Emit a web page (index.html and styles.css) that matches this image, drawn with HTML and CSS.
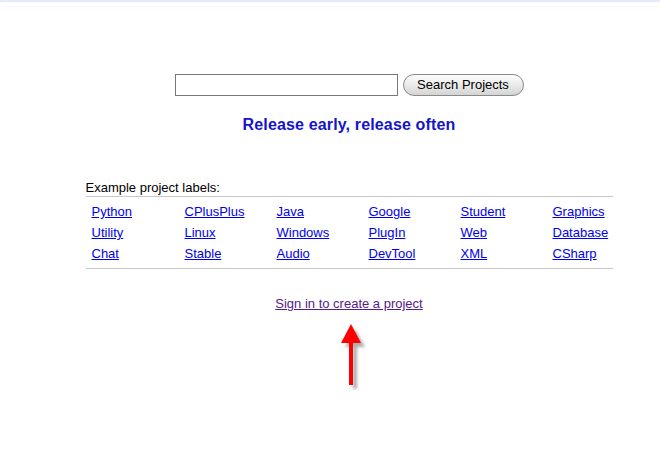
FILE: index.html
```html
<!DOCTYPE html>
<html>
<head>
<meta charset="utf-8">
<link rel="stylesheet" href="styles.css">
</head>
<body>
<div class="topband"></div>
<div class="page">
  <form class="search">
    <input class="search-input" type="text">
    <button class="search-btn" type="button">Search Projects</button>
  </form>
  <h2 class="motto">Release early, release often</h2>
  <div class="labels">
    <div class="labels-title">Example project labels:</div>
    <div class="labels-grid">
      <a href="#">Python</a><a href="#">CPlusPlus</a><a href="#">Java</a><a href="#">Google</a><a href="#">Student</a><a href="#">Graphics</a>
      <a href="#">Utility</a><a href="#">Linux</a><a href="#">Windows</a><a href="#">PlugIn</a><a href="#">Web</a><a href="#">Database</a>
      <a href="#">Chat</a><a href="#">Stable</a><a href="#">Audio</a><a href="#">DevTool</a><a href="#">XML</a><a href="#">CSharp</a>
    </div>
  </div>
  <div class="signin"><a class="signin-link" href="#">Sign in to create a project</a></div>
  <div class="arrow">
    <svg width="40" height="72" viewBox="0 0 40 72">
      <defs>
        <filter id="sh" x="-50%" y="-50%" width="200%" height="200%">
          <feGaussianBlur stdDeviation="1.6"/>
        </filter>
      </defs>
      <g fill="#9a9a9a" opacity="0.8" filter="url(#sh)" transform="translate(4,4)">
        <polygon points="20,2 30,20 10,20"/>
        <rect x="18" y="19" width="4" height="43"/>
      </g>
      <g fill="#ff0000">
        <polygon points="20,1 30,20 10,20"/>
        <rect x="18" y="19" width="4" height="43"/>
      </g>
    </svg>
  </div>
</div>
</body>
</html>
```
FILE: styles.css
```css
html, body {
  margin: 0;
  padding: 0;
  background: #fff;
}
body {
  font-family: "Liberation Sans", Arial, sans-serif;
  font-size: 13px;
  color: #000;
}
.topband {
  height: 2px;
  background: #e3eaf8;
  border-bottom: 3px solid #fff;
  box-shadow: 0 4px 0 -2px #f6f8fd;
}
.page {
  display: flex;
  flex-direction: column;
  align-items: center;
  padding: 69px 0 0 38px;
}
.search {
  display: flex;
  align-items: center;
  gap: 5px;
  margin: 0;
}
.search-input {
  width: 219px;
  height: 18px;
  border: 1px solid #777;
  padding: 1px;
  margin: 0;
  font: inherit;
}
.search-btn {
  width: 121px;
  height: 22px;
  border: 1px solid #8a8a8a;
  border-radius: 11px;
  background: linear-gradient(#fdfdfd, #e6e6e6 60%, #d4d4d4);
  font: inherit;
  font-size: 13px;
  color: #000;
  padding: 0;
  margin-top: -1px;
}
.motto {
  margin: 19px 0 0;
  font-size: 16px;
  font-weight: bold;
  color: #1414cc;
  line-height: 20px;
  letter-spacing: 0.15px;
}
.labels {
  width: 527px;
  margin-top: 45px;
}
.labels-title {
  line-height: 16px;
  padding-bottom: 0;
}
.labels-grid {
  border-top: 1px solid #c8c8c8;
  border-bottom: 1px solid #c8c8c8;
  display: grid;
  grid-template-columns: 93px 92px 92px 92px 92px 66px;
  padding: 4px 0 4px 6px;
}
.labels-grid a {
  color: #0000ee;
  line-height: 21px;
  justify-self: start;
}
.signin {
  margin-top: 27px;
  line-height: 16px;
}
.signin-link {
  color: #551a8b;
}
.arrow {
  margin-top: 11px;
  margin-left: 4px;
  line-height: 0;
}
```
